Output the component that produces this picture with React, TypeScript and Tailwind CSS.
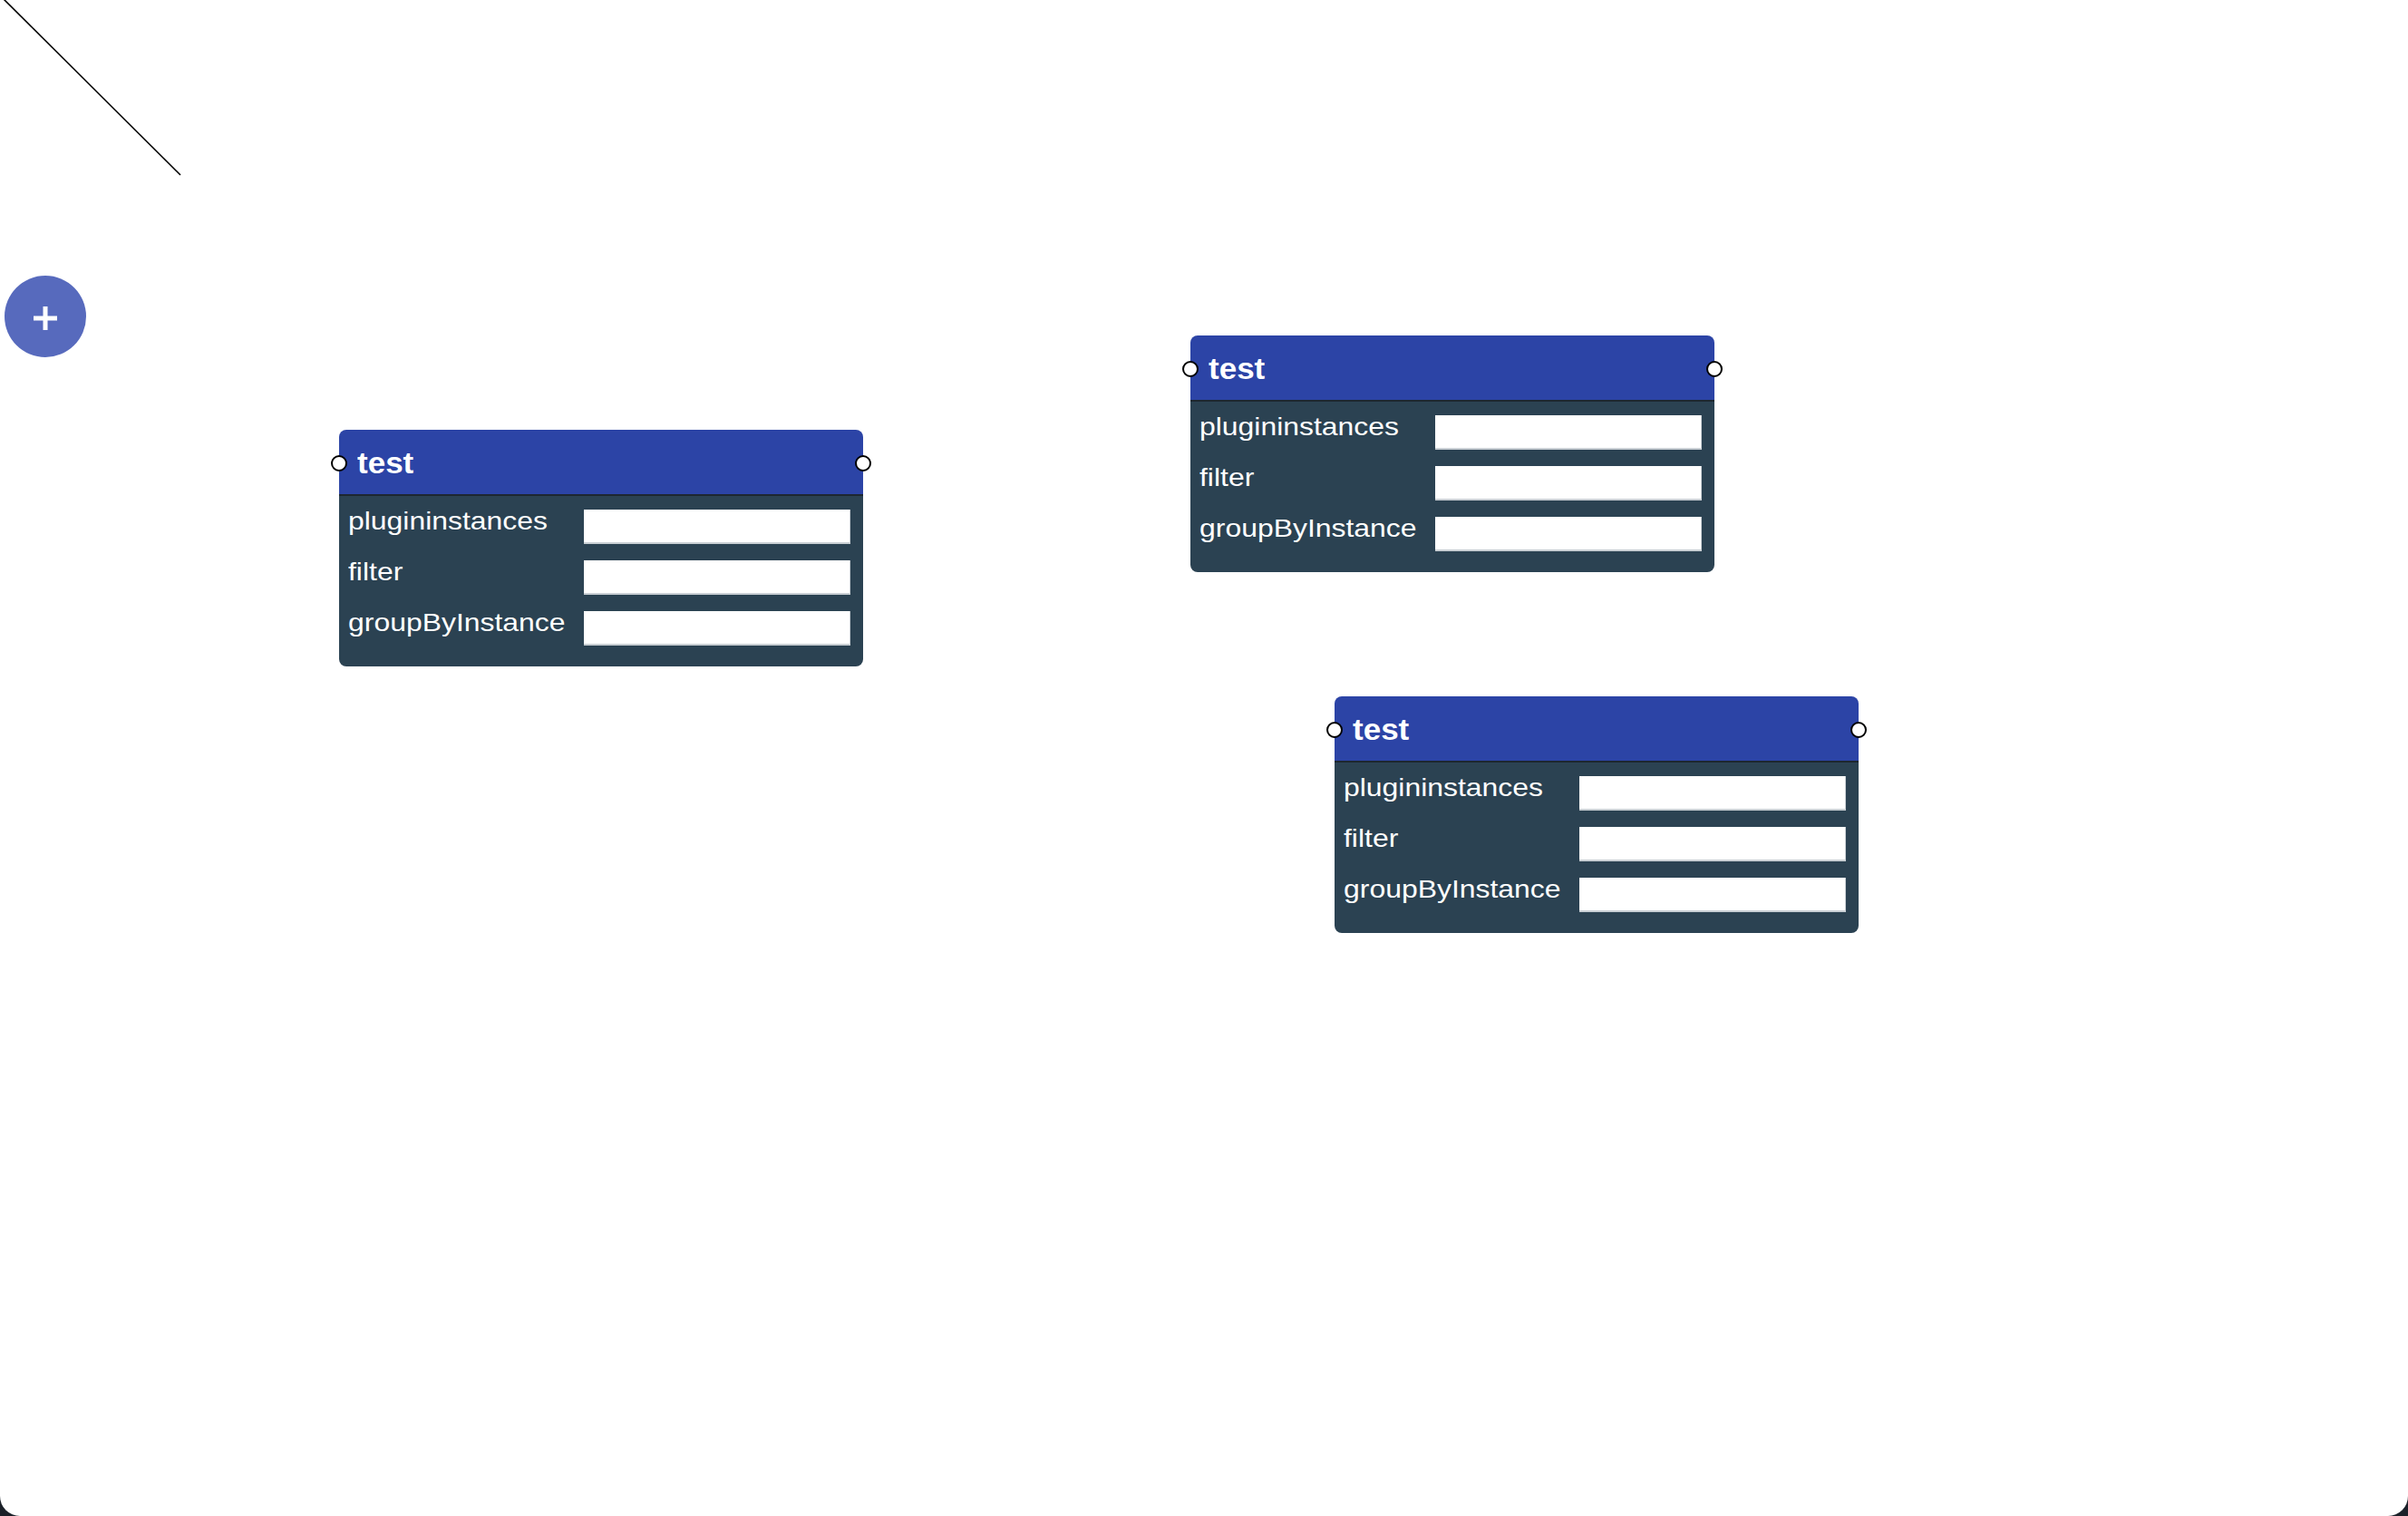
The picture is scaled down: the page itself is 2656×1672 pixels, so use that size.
import React from "react";

const fields = ["plugininstances", "filter", "groupByInstance"];

function Handle({ side }: { side: "left" | "right" }) {
  return (
    <div
      className={
        "absolute top-[28px] w-[18px] h-[18px] rounded-full bg-white border-2 border-black " +
        (side === "left" ? "left-[-9px]" : "right-[-9px]")
      }
    />
  );
}

function Node({ x, y }: { x: number; y: number }) {
  return (
    <div
      className="absolute w-[578px] h-[261px] flex flex-col font-['Liberation_Sans',Arial,sans-serif]"
      style={{ left: x, top: y }}
    >
      <div className="h-[73px] shrink-0 bg-[#2c44a6] rounded-t-[8px] border-b-2 border-[#1d2730] flex items-center pl-[20px]">
        <span className="inline-block origin-left scale-x-[1.03] text-white font-bold text-[34px] leading-none">test</span>
      </div>
      <div className="flex-1 bg-[#2b4252] rounded-b-[8px] pt-[15px] flex flex-col gap-[18px]">
        {fields.map((f) => (
          <div key={f} className="flex items-start">
            <div className="w-[270px] shrink-0 pl-[10px] -mt-[4px]">
              <span className="inline-block origin-left scale-x-[1.12] text-white text-[28.5px] leading-[32px]">{f}</span>
            </div>
            <div className="w-[294px] h-[38px] bg-white border-b-2 border-r border-[#c9cfd4]" />
          </div>
        ))}
      </div>
      <Handle side="left" />
      <Handle side="right" />
    </div>
  );
}

export default function App() {
  return (
    <div className="w-[2656px] h-[1672px] bg-[#1b2129] overflow-hidden">
      <div className="relative w-full h-full bg-white rounded-b-[22px] overflow-hidden">
        <svg className="absolute left-0 top-0" width="220" height="220">
          <line x1="4" y1="-1" x2="199" y2="193" stroke="#000" strokeWidth="1.6" />
        </svg>
        <button className="absolute left-[5px] top-[304px] w-[90px] h-[90px] rounded-full bg-[#576abd] flex items-center justify-center">
          <svg width="26" height="26" viewBox="0 0 26 26" className="mt-[4px]">
            <rect x="10.5" y="0" width="5" height="26" fill="#fff" />
            <rect x="0" y="10.5" width="26" height="5" fill="#fff" />
          </svg>
        </button>
        <Node x={374} y={474} />
        <Node x={1313} y={370} />
        <Node x={1472} y={768} />
      </div>
    </div>
  );
}
